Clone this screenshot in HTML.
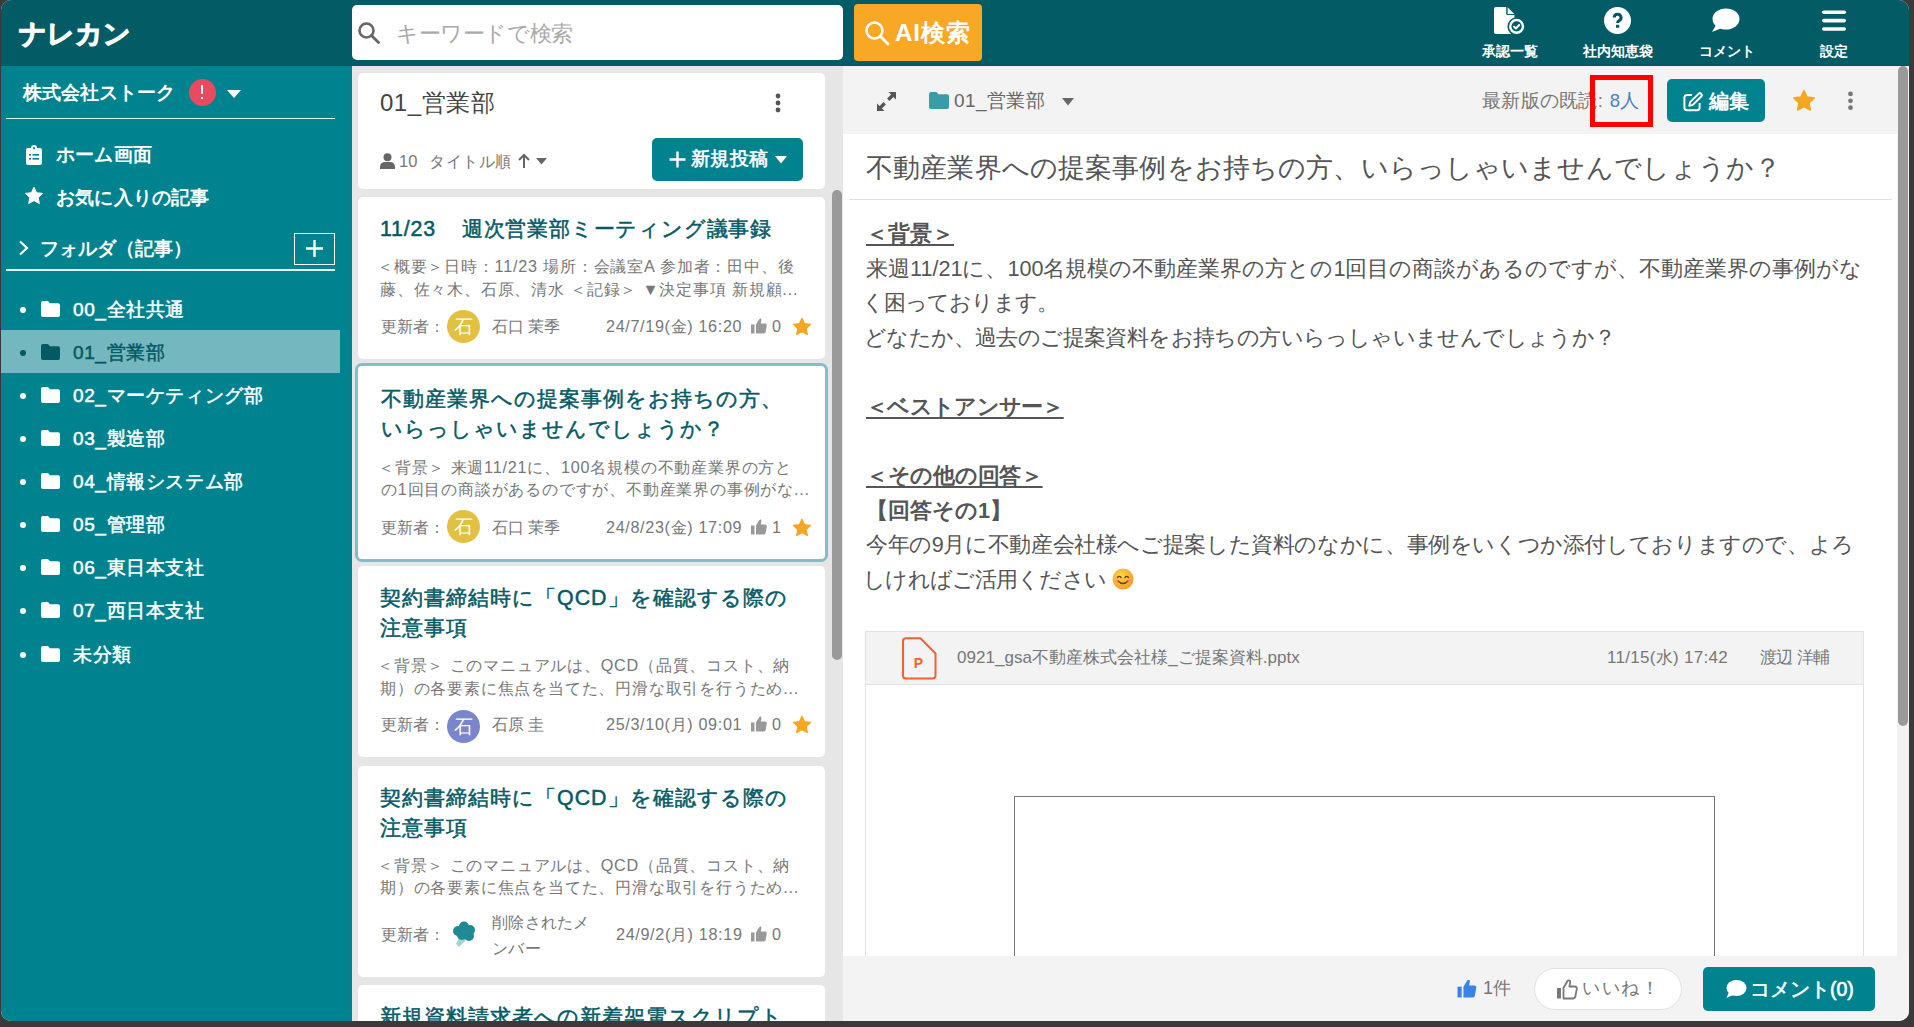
<!DOCTYPE html>
<html><head><meta charset="utf-8">
<style>
*{box-sizing:border-box;margin:0;padding:0}
html,body{width:1914px;height:1027px;overflow:hidden;background:#3a3a3a;font-family:"Liberation Sans",sans-serif}
#win{position:absolute;left:0;top:0;width:1914px;height:1027px;clip-path:inset(0 5px 6px 1px round 10px);background:#fff}
.a{position:absolute}
.t{position:absolute;white-space:nowrap}
#hdr{left:0;top:0;width:1914px;height:66px;background:#025b65;border-bottom:1px solid #01555f}
#side{left:0;top:66px;width:352px;height:961px;background:#00838f}
#mid{left:352px;top:66px;width:491px;height:961px;background:#e6e6e6}
#tool{left:843px;top:66px;width:1071px;height:68px;background:#f3f3f3}
#bot{left:843px;top:956px;width:1071px;height:71px;background:#f3f3f3}
.card{position:absolute;left:358px;width:467px;background:#fff;border-radius:5px}
.ctitle{position:absolute;left:22px;font-size:21.4px;line-height:30px;color:#035a64;font-weight:normal;-webkit-text-stroke:0.5px #035a64;letter-spacing:1px}
.cex{position:absolute;left:22px;font-size:16.2px;line-height:22.8px;color:#777;letter-spacing:0.8px;white-space:nowrap}
.cfoot{position:absolute;left:23px;font-size:16.2px;color:#777;white-space:nowrap}
.av{position:absolute;width:33px;height:33px;border-radius:50%;color:#fff;font-size:19px;text-align:center;line-height:33px}
.fi{position:absolute;left:0;width:352px;height:43px}
.fi .dot{position:absolute;left:19.5px;top:19px;width:6px;height:6px;border-radius:50%;background:#fff}
.fi svg{position:absolute;left:41px;top:13px}
.fi .t{left:73px;top:0;line-height:43px;font-size:19px;color:#fff;font-weight:normal;-webkit-text-stroke-width:0.5px;letter-spacing:0.6px}
.body{position:absolute;left:866px;font-size:21.6px;line-height:34.6px;color:#555;letter-spacing:0px;white-space:nowrap}
.hb{font-weight:bold;text-decoration:underline;text-underline-offset:3px}
</style></head><body>
<div id="win">
<!-- HEADER -->
<div id="hdr" class="a">
  <div class="t" style="left:19px;top:14px;font-size:26.5px;line-height:40px;color:#fff;font-weight:bold;-webkit-text-stroke-width:1.1px">ナレカン</div>
  <div class="a" style="left:352px;top:5px;width:491px;height:55px;background:#fff;border-radius:5px"></div>
  <svg class="a" style="left:357px;top:21px" width="24" height="24" viewBox="0 0 24 24"><circle cx="9.5" cy="9.5" r="7" fill="none" stroke="#666" stroke-width="2.6"/><path d="M14.5 14.5 L21.5 21.5" stroke="#666" stroke-width="2.8" stroke-linecap="round"/></svg>
  <div class="t" style="left:396px;top:14px;font-size:22px;line-height:40px;color:#aaa;letter-spacing:-0.4px">キーワードで検索</div>
  <div class="a" style="left:854px;top:4px;width:128px;height:57px;background:#f9a825;border-radius:4px"></div>
  <svg class="a" style="left:864px;top:20px" width="26" height="26" viewBox="0 0 26 26"><circle cx="10.5" cy="10.5" r="8" fill="none" stroke="#fff" stroke-width="2.6"/><path d="M16.5 16.5 L24 24" stroke="#fff" stroke-width="2.8" stroke-linecap="round"/></svg>
  <div class="t" style="left:895px;top:13px;font-size:24px;line-height:40px;color:#fff;font-weight:bold;letter-spacing:1px">AI検索</div>
  <!-- header icons -->
  <svg class="a" style="left:1493px;top:6px" width="33" height="29" viewBox="0 0 33 29"><path d="M3 1 H13.2 V7.8 A1.2 1.2 0 0 0 14.4 9 H21.5 V28 H3 A2 2 0 0 1 1 26 V3 A2 2 0 0 1 3 1 Z" fill="#fff"/><path d="M14.6 1.2 L21.3 7.9 H14.6 Z" fill="#fff"/><circle cx="23.6" cy="20.4" r="9.2" fill="#025b65"/><circle cx="23.6" cy="20.4" r="7.6" fill="#fff"/><circle cx="23.6" cy="20.4" r="5.1" fill="#025b65"/><path d="M21 20.6 L22.9 22.5 L26.2 19" stroke="#fff" stroke-width="2" fill="none" stroke-linecap="round" stroke-linejoin="round"/></svg>
  <div class="t" style="left:1482px;top:42px;font-size:14px;line-height:18px;color:#fff;font-weight:bold">承認一覧</div>
  <svg class="a" style="left:1603px;top:6px" width="29" height="29" viewBox="0 0 29 29"><circle cx="14.5" cy="14.5" r="13.5" fill="#fff"/><path d="M11.2 11.6 A3.4 3.4 0 1 1 16.2 14.6 C15 15.2 14.6 15.8 14.6 17" stroke="#005662" stroke-width="3" fill="none" stroke-linecap="butt"/><rect x="13" y="18.8" width="3.2" height="3" fill="#025b65"/></svg>
  <div class="t" style="left:1583px;top:42px;font-size:14px;line-height:18px;color:#fff;font-weight:bold">社内知恵袋</div>
  <svg class="a" style="left:1711px;top:8px" width="29" height="25" viewBox="0 0 29 25"><ellipse cx="15" cy="11" rx="13.5" ry="10.5" fill="#fff"/><path d="M5 17 L1 24 L11 20 Z" fill="#fff"/></svg>
  <div class="t" style="left:1699px;top:42px;font-size:14px;line-height:18px;color:#fff;font-weight:bold">コメント</div>
  <svg class="a" style="left:1821px;top:9px" width="26" height="24" viewBox="0 0 26 24"><rect x="1" y="1.5" width="24" height="3.6" rx="1.8" fill="#fff"/><rect x="1" y="9.8" width="24" height="3.6" rx="1.8" fill="#fff"/><rect x="1" y="18.2" width="24" height="3.6" rx="1.8" fill="#fff"/></svg>
  <div class="t" style="left:1820px;top:42px;font-size:14px;line-height:18px;color:#fff;font-weight:bold">設定</div>
</div>

<!-- SIDEBAR -->
<div id="side" class="a">
  <div class="t" style="left:23px;top:12px;font-size:19px;line-height:30px;color:#fff;font-weight:bold">株式会社ストーク</div>
  <div class="a" style="left:188.5px;top:12.5px;width:27px;height:27px;border-radius:50%;background:#e84a5f"></div>
  <div class="a" style="left:200.8px;top:18.5px;width:1.9px;height:9.5px;background:#fff;border-radius:1px"></div>
  <div class="a" style="left:200.8px;top:30.5px;width:1.9px;height:2.2px;background:#fff"></div>
  <svg class="a" style="left:226px;top:23px" width="16" height="10" viewBox="0 0 16 10"><path d="M1 1 H15 L8 9 Z" fill="#fff"/></svg>
  <div class="a" style="left:6px;top:51.5px;width:329px;height:1.5px;background:#fff;opacity:.9"></div>
  <!-- home -->
  <svg class="a" style="left:26px;top:79px" width="16" height="20" viewBox="0 0 16 20"><path d="M2 3 H5 A3 3 0 0 1 11 3 H14 A2 2 0 0 1 16 5 V18 A2 2 0 0 1 14 20 H2 A2 2 0 0 1 0 18 V5 A2 2 0 0 1 2 3 Z" fill="#fff"/><circle cx="8" cy="3.2" r="1.1" fill="#00838f"/><rect x="3" y="9" width="2" height="1.6" fill="#00838f"/><rect x="6.5" y="9" width="6.5" height="1.6" fill="#00838f"/><rect x="3" y="13" width="2" height="1.6" fill="#00838f"/><rect x="6.5" y="13" width="6.5" height="1.6" fill="#00838f"/></svg>
  <div class="t" style="left:56px;top:74px;font-size:19.2px;line-height:30px;color:#fff;font-weight:bold;letter-spacing:0.2px">ホーム画面</div>
  <svg class="a" style="left:24px;top:120px" width="20" height="20" viewBox="0 0 24 24"><path d="M12 1.5 L15.1 8 L22.3 8.9 L17 13.9 L18.4 21 L12 17.5 L5.6 21 L7 13.9 L1.7 8.9 L8.9 8 Z" fill="#fff" stroke="#fff" stroke-width="1.2" stroke-linejoin="round"/></svg>
  <div class="t" style="left:56px;top:117px;font-size:19.2px;line-height:30px;color:#fff;font-weight:bold;letter-spacing:0.2px">お気に入りの記事</div>
  <!-- folder header -->
  <svg class="a" style="left:18px;top:174px" width="11" height="16" viewBox="0 0 11 16"><path d="M2 1.5 L9 8 L2 14.5" stroke="#fff" stroke-width="2.2" fill="none"/></svg>
  <div class="t" style="left:40px;top:168px;font-size:19px;line-height:30px;color:#fff;font-weight:bold;letter-spacing:0px">フォルダ（記事）</div>
  <div class="a" style="left:294px;top:166.5px;width:41px;height:32px;border:1.3px solid #fff"></div>
  <svg class="a" style="left:305px;top:173px" width="19" height="19" viewBox="0 0 19 19"><path d="M9.5 1 V18 M1 9.5 H18" stroke="#fff" stroke-width="2.4"/></svg>
  <div class="a" style="left:6px;top:203px;width:329px;height:1.5px;background:#fff;opacity:.9"></div>
  <!-- folders -->
  <div class="fi" style="top:221.5px"><div class="dot"></div><svg width="19" height="16" viewBox="0 0 19 16"><path d="M2 0 H7 L9 2.2 H17 A2 2 0 0 1 19 4.2 V14 A2 2 0 0 1 17 16 H2 A2 2 0 0 1 0 14 V2 A2 2 0 0 1 2 0 Z" fill="#fff"/></svg><div class="t">00_全社共通</div></div>
  <div class="a" style="left:1px;top:264.2px;width:339px;height:42.5px;background:#75b7be"></div>
  <div class="fi" style="top:264.6px"><div class="dot" style="background:#035a64"></div><svg width="19" height="16" viewBox="0 0 19 16"><path d="M2 0 H7 L9 2.2 H17 A2 2 0 0 1 19 4.2 V14 A2 2 0 0 1 17 16 H2 A2 2 0 0 1 0 14 V2 A2 2 0 0 1 2 0 Z" fill="#035a64"/></svg><div class="t" style="color:#035a64">01_営業部</div></div>
  <div class="fi" style="top:307.7px"><div class="dot"></div><svg width="19" height="16" viewBox="0 0 19 16"><path d="M2 0 H7 L9 2.2 H17 A2 2 0 0 1 19 4.2 V14 A2 2 0 0 1 17 16 H2 A2 2 0 0 1 0 14 V2 A2 2 0 0 1 2 0 Z" fill="#fff"/></svg><div class="t">02_マーケティング部</div></div>
  <div class="fi" style="top:350.9px"><div class="dot"></div><svg width="19" height="16" viewBox="0 0 19 16"><path d="M2 0 H7 L9 2.2 H17 A2 2 0 0 1 19 4.2 V14 A2 2 0 0 1 17 16 H2 A2 2 0 0 1 0 14 V2 A2 2 0 0 1 2 0 Z" fill="#fff"/></svg><div class="t">03_製造部</div></div>
  <div class="fi" style="top:394px"><div class="dot"></div><svg width="19" height="16" viewBox="0 0 19 16"><path d="M2 0 H7 L9 2.2 H17 A2 2 0 0 1 19 4.2 V14 A2 2 0 0 1 17 16 H2 A2 2 0 0 1 0 14 V2 A2 2 0 0 1 2 0 Z" fill="#fff"/></svg><div class="t">04_情報システム部</div></div>
  <div class="fi" style="top:437.1px"><div class="dot"></div><svg width="19" height="16" viewBox="0 0 19 16"><path d="M2 0 H7 L9 2.2 H17 A2 2 0 0 1 19 4.2 V14 A2 2 0 0 1 17 16 H2 A2 2 0 0 1 0 14 V2 A2 2 0 0 1 2 0 Z" fill="#fff"/></svg><div class="t">05_管理部</div></div>
  <div class="fi" style="top:480.2px"><div class="dot"></div><svg width="19" height="16" viewBox="0 0 19 16"><path d="M2 0 H7 L9 2.2 H17 A2 2 0 0 1 19 4.2 V14 A2 2 0 0 1 17 16 H2 A2 2 0 0 1 0 14 V2 A2 2 0 0 1 2 0 Z" fill="#fff"/></svg><div class="t">06_東日本支社</div></div>
  <div class="fi" style="top:523.4px"><div class="dot"></div><svg width="19" height="16" viewBox="0 0 19 16"><path d="M2 0 H7 L9 2.2 H17 A2 2 0 0 1 19 4.2 V14 A2 2 0 0 1 17 16 H2 A2 2 0 0 1 0 14 V2 A2 2 0 0 1 2 0 Z" fill="#fff"/></svg><div class="t">07_西日本支社</div></div>
  <div class="fi" style="top:566.5px"><div class="dot"></div><svg width="19" height="16" viewBox="0 0 19 16"><path d="M2 0 H7 L9 2.2 H17 A2 2 0 0 1 19 4.2 V14 A2 2 0 0 1 17 16 H2 A2 2 0 0 1 0 14 V2 A2 2 0 0 1 2 0 Z" fill="#fff"/></svg><div class="t">未分類</div></div>
</div>

<!-- MIDDLE -->
<div id="mid" class="a"></div>
<!-- scrollbar mid -->
<div class="a" style="left:832px;top:190px;width:10px;height:470px;border-radius:5px;background:#9a9a9a"></div>
<!-- header card -->
<div class="card" style="top:72.5px;height:116.5px">
  <div class="t" style="left:22px;top:14px;font-size:24px;line-height:32px;color:#444;letter-spacing:0.5px">01_営業部</div>
  <svg class="a" style="left:416px;top:20px" width="8" height="20" viewBox="0 0 8 20"><circle cx="4" cy="3" r="2.4" fill="#555"/><circle cx="4" cy="10" r="2.4" fill="#555"/><circle cx="4" cy="17" r="2.4" fill="#555"/></svg>
  <svg class="a" style="left:22px;top:80px" width="15" height="16" viewBox="0 0 15 16"><circle cx="7.5" cy="4.2" r="4" fill="#666"/><path d="M0 16 V13.5 A5 5 0 0 1 5 9 H10 A5 5 0 0 1 15 13.5 V16 Z" fill="#666"/></svg>
  <div class="t" style="left:41px;top:75px;font-size:16.5px;line-height:26px;color:#777">10</div>
  <div class="t" style="left:71px;top:75px;font-size:16.2px;line-height:26px;color:#777;letter-spacing:0.6px">タイトル順</div>
  <svg class="a" style="left:160px;top:80px" width="12" height="16" viewBox="0 0 12 16"><path d="M6 15 V2 M1 7 L6 2 L11 7" stroke="#666" stroke-width="2" fill="none"/></svg>
  <svg class="a" style="left:178px;top:85px" width="11" height="7" viewBox="0 0 11 7"><path d="M0 0 H11 L5.5 6.5 Z" fill="#666"/></svg>
  <div class="a" style="left:294px;top:65.5px;width:151px;height:42.5px;background:#00838f;border-radius:5px"></div>
  <svg class="a" style="left:311px;top:78px" width="17" height="17" viewBox="0 0 17 17"><path d="M8.5 0.5 V16.5 M0.5 8.5 H16.5" stroke="#fff" stroke-width="2.4"/></svg>
  <div class="t" style="left:333px;top:72px;font-size:19.2px;line-height:28px;color:#fff;font-weight:normal;-webkit-text-stroke-width:0.6px;letter-spacing:0.3px">新規投稿</div>
  <svg class="a" style="left:417px;top:83px" width="12" height="8" viewBox="0 0 12 8"><path d="M0 0 H12 L6 7.5 Z" fill="#fff"/></svg>
</div>

<!-- card 1 -->
<div class="card" style="top:197px;height:162px">
  <div class="ctitle" style="top:17px;letter-spacing:0.8px">11/23<span style="margin-right:4px">　</span>週次営業部ミーティング議事録</div>
  <div class="cex" style="top:58px"><span style="margin-left:-3px">＜</span>概要＞日時：11/23 場所：会議室A 参加者：田中、後<br>藤、佐々木、石原、清水 ＜記録＞ ▼決定事項 新規顧...</div>
  <div class="cfoot" style="top:116px;line-height:26px">更新者：</div>
  <div class="av" style="left:89px;top:112.5px;background:#e2c042">石</div>
  <div class="cfoot" style="left:134px;top:116px;line-height:26px">石口 茉季</div>
  <div class="cfoot" style="left:248px;top:116px;line-height:26px;letter-spacing:0.65px">24/7/19(金) 16:20</div>
  <svg class="a" style="left:393px;top:121px" width="16" height="16" viewBox="0 0 16 16"><rect x="0" y="6.5" width="3.5" height="9" fill="#999"/><path d="M5 6.5 L8.2 1.2 C9.3 0 10.6 0.8 10.4 2.2 L9.8 5.5 H14 A1.8 1.8 0 0 1 15.8 7.5 L14.6 14 A1.8 1.8 0 0 1 12.8 15.5 H5 Z" fill="#999"/></svg>
  <div class="cfoot" style="left:414px;top:116px;line-height:26px">0</div>
  <svg class="a" style="left:434px;top:120px" width="20" height="20" viewBox="0 0 24 24"><path d="M12 1.5 L15.1 8 L22.3 8.9 L17 13.9 L18.4 21 L12 17.5 L5.6 21 L7 13.9 L1.7 8.9 L8.9 8 Z" fill="#f5a623" stroke="#f5a623" stroke-width="1.5" stroke-linejoin="round"/></svg>
</div>

<!-- card 2 (selected) -->
<div class="card" style="left:355px;top:362.5px;width:473px;height:199px;border:3px solid #80bfc5;border-radius:7px">
  <div class="ctitle" style="left:23px;top:18px;white-space:nowrap">不動産業界への提案事例をお持ちの方、<br>いらっしゃいませんでしょうか？</div>
  <div class="cex" style="left:23px;top:90px"><span style="margin-left:-3px">＜</span>背景＞ 来週11/21に、100名規模の不動産業界の方と<br>の1回目の商談があるのですが、不動産業界の事例がな...</div>
  <div class="cfoot" style="left:23px;top:148px;line-height:26px">更新者：</div>
  <div class="av" style="left:89px;top:144.5px;background:#e2c042">石</div>
  <div class="cfoot" style="left:134px;top:148px;line-height:26px">石口 茉季</div>
  <div class="cfoot" style="left:248px;top:148px;line-height:26px;letter-spacing:0.65px">24/8/23(金) 17:09</div>
  <svg class="a" style="left:393px;top:153px" width="16" height="16" viewBox="0 0 16 16"><rect x="0" y="6.5" width="3.5" height="9" fill="#999"/><path d="M5 6.5 L8.2 1.2 C9.3 0 10.6 0.8 10.4 2.2 L9.8 5.5 H14 A1.8 1.8 0 0 1 15.8 7.5 L14.6 14 A1.8 1.8 0 0 1 12.8 15.5 H5 Z" fill="#999"/></svg>
  <div class="cfoot" style="left:414px;top:148px;line-height:26px">1</div>
  <svg class="a" style="left:434px;top:152px" width="20" height="20" viewBox="0 0 24 24"><path d="M12 1.5 L15.1 8 L22.3 8.9 L17 13.9 L18.4 21 L12 17.5 L5.6 21 L7 13.9 L1.7 8.9 L8.9 8 Z" fill="#f5a623" stroke="#f5a623" stroke-width="1.5" stroke-linejoin="round"/></svg>
</div>

<!-- card 3 -->
<div class="card" style="top:566px;height:191px">
  <div class="ctitle" style="top:17px">契約書締結時に「QCD」を確認する際の<br>注意事項</div>
  <div class="cex" style="top:88px"><span style="margin-left:-3px">＜</span>背景＞ このマニュアルは、QCD（品質、コスト、納<br>期）の各要素に焦点を当てた、円滑な取引を行うため...</div>
  <div class="cfoot" style="top:145px;line-height:26px">更新者：</div>
  <div class="av" style="left:89px;top:143.5px;background:#7986cb">石</div>
  <div class="cfoot" style="left:134px;top:145px;line-height:26px">石原 圭</div>
  <div class="cfoot" style="left:248px;top:145px;line-height:26px;letter-spacing:0.65px">25/3/10(月) 09:01</div>
  <svg class="a" style="left:393px;top:150px" width="16" height="16" viewBox="0 0 16 16"><rect x="0" y="6.5" width="3.5" height="9" fill="#999"/><path d="M5 6.5 L8.2 1.2 C9.3 0 10.6 0.8 10.4 2.2 L9.8 5.5 H14 A1.8 1.8 0 0 1 15.8 7.5 L14.6 14 A1.8 1.8 0 0 1 12.8 15.5 H5 Z" fill="#999"/></svg>
  <div class="cfoot" style="left:414px;top:145px;line-height:26px">0</div>
  <svg class="a" style="left:434px;top:149px" width="20" height="20" viewBox="0 0 24 24"><path d="M12 1.5 L15.1 8 L22.3 8.9 L17 13.9 L18.4 21 L12 17.5 L5.6 21 L7 13.9 L1.7 8.9 L8.9 8 Z" fill="#f5a623" stroke="#f5a623" stroke-width="1.5" stroke-linejoin="round"/></svg>
</div>

<!-- card 4 -->
<div class="card" style="top:765.5px;height:211.5px">
  <div class="ctitle" style="top:17px">契約書締結時に「QCD」を確認する際の<br>注意事項</div>
  <div class="cex" style="top:88px"><span style="margin-left:-3px">＜</span>背景＞ このマニュアルは、QCD（品質、コスト、納<br>期）の各要素に焦点を当てた、円滑な取引を行うため...</div>
  <div class="cfoot" style="top:155px;line-height:26px">更新者：</div>
  <svg class="a" style="left:94px;top:155px" width="25" height="27" viewBox="0 0 25 27"><path d="M8 15 L4 23 L7 26 L14 19 Z" fill="#a9cfd3"/><circle cx="12" cy="5.5" r="5" fill="#1f8a94"/><circle cx="6" cy="10" r="5" fill="#1f8a94"/><circle cx="18" cy="9" r="5" fill="#1f8a94"/><circle cx="17" cy="15" r="5" fill="#1f8a94"/><circle cx="10" cy="14" r="5" fill="#1f8a94"/></svg>
  <div class="cfoot" style="left:134px;top:143px;line-height:26px;letter-spacing:0.3px">削除されたメ<br>ンバー</div>
  <div class="cfoot" style="left:258px;top:155px;line-height:26px;letter-spacing:0.65px">24/9/2(月) 18:19</div>
  <svg class="a" style="left:393px;top:160px" width="16" height="16" viewBox="0 0 16 16"><rect x="0" y="6.5" width="3.5" height="9" fill="#999"/><path d="M5 6.5 L8.2 1.2 C9.3 0 10.6 0.8 10.4 2.2 L9.8 5.5 H14 A1.8 1.8 0 0 1 15.8 7.5 L14.6 14 A1.8 1.8 0 0 1 12.8 15.5 H5 Z" fill="#999"/></svg>
  <div class="cfoot" style="left:414px;top:155px;line-height:26px">0</div>
</div>

<!-- card 5 -->
<div class="card" style="top:985px;height:60px">
  <div class="ctitle" style="top:17px">新規資料請求者への新着架電スクリプト</div>
</div>

<!-- RIGHT -->
<div id="tool" class="a"></div>
<!-- toolbar contents -->
<svg class="a" style="left:876px;top:91px" width="21" height="21" viewBox="0 0 21 21"><path d="M12.5 1 H20 V8.5 L17.4 5.9 L13.4 9.9 L11.1 7.6 L15.1 3.6 Z" fill="#555"/><path d="M8.5 20 H1 V12.5 L3.6 15.1 L7.6 11.1 L9.9 13.4 L5.9 17.4 Z" fill="#555"/></svg>
<svg class="a" style="left:929px;top:92px" width="20" height="17" viewBox="0 0 20 17"><path d="M2 0 H7.5 L9.5 2.3 H18 A2 2 0 0 1 20 4.3 V15 A2 2 0 0 1 18 17 H2 A2 2 0 0 1 0 15 V2 A2 2 0 0 1 2 0 Z" fill="#3a9ca6"/></svg>
<div class="t" style="left:954px;top:86px;font-size:19px;line-height:30px;color:#666;letter-spacing:0.4px">01_営業部</div>
<svg class="a" style="left:1062px;top:98px" width="12" height="8" viewBox="0 0 12 8"><path d="M0 0 H12 L6 7.5 Z" fill="#666"/></svg>
<div class="t" style="left:1482px;top:86px;font-size:18.5px;line-height:30px;color:#777;letter-spacing:0.3px">最新版の既読: <span style="color:#4a80c2;margin-left:1px">8人</span></div>
<div class="a" style="left:1590px;top:75px;width:63px;height:52.3px;border:5.6px solid #ff0000"></div>
<div class="a" style="left:1667px;top:79px;width:98px;height:43px;background:#00838f;border-radius:5px"></div>
<svg class="a" style="left:1683px;top:92px" width="20" height="20" viewBox="0 0 20 20"><path d="M9 3 H4 A2.6 2.6 0 0 0 1.4 5.6 V15.6 A2.6 2.6 0 0 0 4 18.2 H14 A2.6 2.6 0 0 0 16.6 15.6 V11" fill="none" stroke="#fff" stroke-width="2"/><path d="M15.5 1.8 A1.9 1.9 0 0 1 18.2 4.5 L9.8 12.9 L6.3 13.7 L7.1 10.2 Z" fill="none" stroke="#fff" stroke-width="1.9" stroke-linejoin="round"/></svg>
<div class="t" style="left:1709px;top:86px;font-size:20px;line-height:30px;color:#fff;font-weight:bold">編集</div>
<svg class="a" style="left:1792px;top:89px" width="24" height="24" viewBox="0 0 24 24"><path d="M12 1.5 L15.1 8 L22.3 8.9 L17 13.9 L18.4 21 L12 17.5 L5.6 21 L7 13.9 L1.7 8.9 L8.9 8 Z" fill="#f5a623" stroke="#f5a623" stroke-width="1.5" stroke-linejoin="round"/></svg>
<svg class="a" style="left:1846px;top:90px" width="9" height="22" viewBox="0 0 9 22"><circle cx="4.5" cy="3.9" r="2.4" fill="#777"/><circle cx="4.5" cy="10.8" r="2.4" fill="#777"/><circle cx="4.5" cy="17.7" r="2.4" fill="#777"/></svg>

<!-- article -->
<div class="t" style="left:866px;top:150px;font-size:27px;line-height:36px;color:#555;letter-spacing:0.14px">不動産業界への提案事例をお持ちの方、いらっしゃいませんでしょうか？</div>
<div class="a" style="left:849px;top:199px;width:1043px;height:1px;background:#e2e2e2"></div>
<div class="body" style="top:217px">
<span class="hb">＜背景＞</span><br>
来週11/21に、100名規模の不動産業界の方との1回目の商談があるのですが、不動産業界の事例がな<br>
<span style="letter-spacing:-1px;margin-left:-4px">く困っております。</span><br>
<span style="letter-spacing:-0.6px;margin-left:-2px">どなたか、過去のご提案資料をお持ちの方いらっしゃいませんでしょうか？</span><br>
<br>
<span class="hb" style="letter-spacing:-0.7px">＜ベストアンサー＞</span><br>
<br>
<span class="hb" style="letter-spacing:-0.3px">＜その他の回答＞</span><br>
<b>【回答その1】</b><br>
<span style="letter-spacing:-0.38px">今年の9月に不動産会社様へご提案した資料のなかに、事例をいくつか添付しておりますので、よろ</span><br>
<span style="letter-spacing:-0.7px;margin-left:-3px">しければご活用ください</span><svg style="vertical-align:-3px;margin-left:6px" width="22" height="22" viewBox="0 0 22 22"><defs><radialGradient id="eg" cx="40%" cy="35%" r="70%"><stop offset="0" stop-color="#ffd54a"/><stop offset="1" stop-color="#f59a2a"/></radialGradient></defs><circle cx="11" cy="11" r="10.5" fill="url(#eg)"/><path d="M5.5 9.5 Q7.3 7.3 9 9.5 M13 9.5 Q14.7 7.3 16.5 9.5" stroke="#6b3a1a" stroke-width="1.4" fill="none" stroke-linecap="round"/><path d="M6 13 Q11 18 16 13" stroke="#6b3a1a" stroke-width="1.5" fill="none" stroke-linecap="round"/><ellipse cx="5" cy="13" rx="2" ry="1.2" fill="#f77" opacity=".5"/><ellipse cx="17" cy="13" rx="2" ry="1.2" fill="#f77" opacity=".5"/></svg>
</div>

<!-- attachment -->
<div class="a" style="left:865px;top:631px;width:999px;height:400px;border:1px solid #e3e3e3;background:#fff"></div>
<div class="a" style="left:866px;top:632px;width:997px;height:53px;background:#f3f3f3;border-bottom:1px solid #e3e3e3"></div>
<svg class="a" style="left:902px;top:637px" width="35" height="43" viewBox="0 0 35 43"><path d="M4 1.2 H18.5 L33.5 16.5 V38.5 A3 3 0 0 1 30.5 41.5 H4 A3 3 0 0 1 1 38.5 V4.2 A3 3 0 0 1 4 1.2 Z" fill="none" stroke="#f4622e" stroke-width="2"/><text x="16.5" y="31" font-family="Liberation Sans" font-weight="bold" font-size="14" fill="#f4622e" text-anchor="middle">P</text></svg>
<div class="t" style="left:957px;top:645px;font-size:17px;line-height:26px;color:#777;letter-spacing:0.03px">0921_gsa不動産株式会社様_ご提案資料.pptx</div>
<div class="t" style="left:1607px;top:645px;font-size:17px;line-height:26px;color:#777;letter-spacing:0.3px">11/15(水) 17:42</div>
<div class="t" style="left:1760px;top:645px;font-size:17px;line-height:26px;color:#777;letter-spacing:-0.7px">渡辺 洋輔</div>
<div class="a" style="left:1014px;top:796px;width:701px;height:300px;border:1.5px solid #777;background:#fff"></div>

<!-- bottom bar -->
<div id="bot" class="a"></div>
<svg class="a" style="left:1457px;top:979px" width="20" height="19" viewBox="0 0 16 16"><rect x="0" y="6.5" width="3.5" height="9" fill="#3b82e6"/><path d="M5 6.5 L8.2 1.2 C9.3 0 10.6 0.8 10.4 2.2 L9.8 5.5 H14 A1.8 1.8 0 0 1 15.8 7.5 L14.6 14 A1.8 1.8 0 0 1 12.8 15.5 H5 Z" fill="#3b82e6"/></svg>
<div class="t" style="left:1483px;top:975px;font-size:18px;line-height:26px;color:#777">1件</div>
<div class="a" style="left:1534px;top:968px;width:148px;height:42px;background:#fff;border:1px solid #e0e0e0;border-radius:21px"></div>
<svg class="a" style="left:1556px;top:979px" width="22" height="21" viewBox="0 0 22 21"><rect x="1" y="9" width="4" height="10.5" rx="0.5" fill="#777"/><path d="M7.5 9 L11.5 2 C12.5 0.8 14.6 1.5 14.2 3.4 L13.4 7.5 H18.8 A2 2 0 0 1 20.8 9.8 L19.3 17.8 A2.2 2.2 0 0 1 17.1 19.5 H7.5 Z" fill="none" stroke="#777" stroke-width="1.8" stroke-linejoin="round"/></svg>
<div class="t" style="left:1582px;top:975px;font-size:18px;line-height:26px;color:#777;letter-spacing:1.5px">いいね！</div>
<div class="a" style="left:1702.5px;top:967px;width:172.5px;height:43.5px;background:#00838f;border-radius:5px"></div>
<svg class="a" style="left:1725px;top:979px" width="22" height="20" viewBox="0 0 22 20"><ellipse cx="11.5" cy="9" rx="10" ry="8" fill="#fff"/><path d="M4 13 L1.5 19 L9 15.5 Z" fill="#fff"/></svg>
<div class="t" style="left:1750px;top:975px;font-size:19.5px;line-height:28px;color:#fff;font-weight:normal;-webkit-text-stroke-width:0.6px">コメント(0)</div>

<!-- right scrollbar -->
<div class="a" style="left:1897px;top:134px;width:12px;height:822px;background:#f2f2f2"></div>
<div class="a" style="left:1897.5px;top:66px;width:10.5px;height:660px;border-radius:5px;background:#9a9a9a"></div>

</div>
</body></html>
